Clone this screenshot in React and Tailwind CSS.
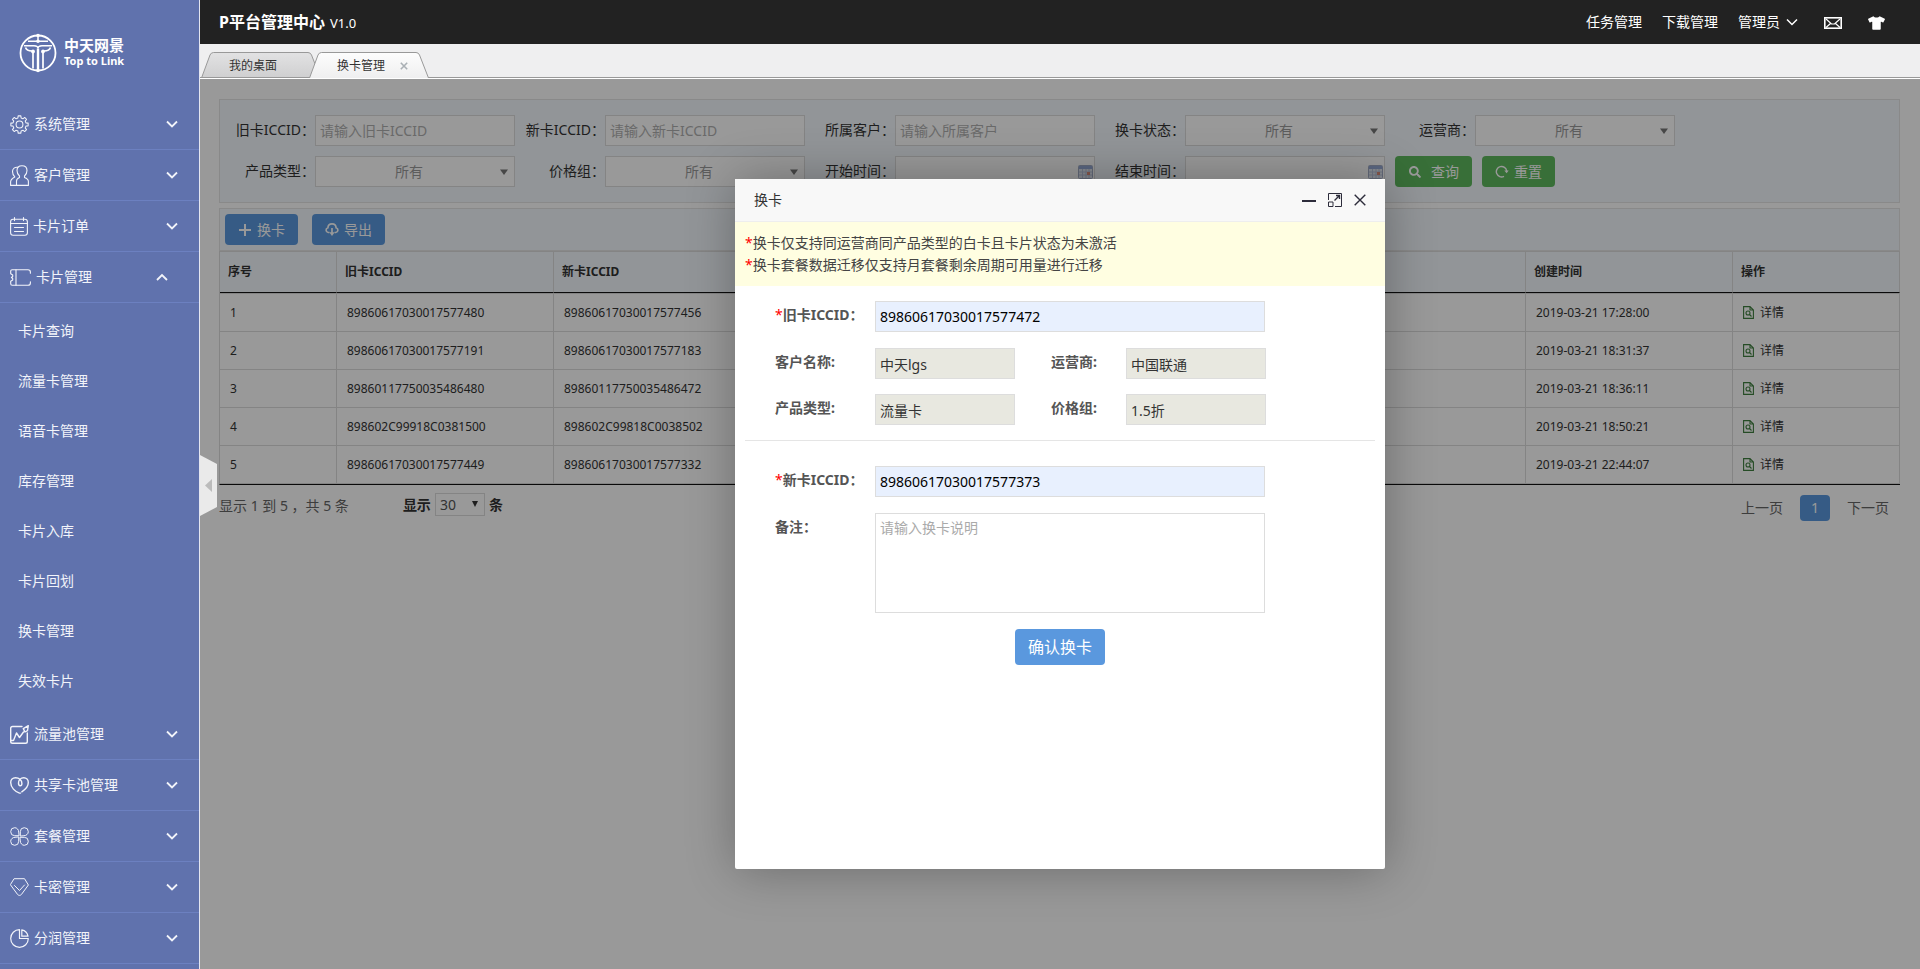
import { useState } from "react";
import { FaSearch, FaTshirt } from "react-icons/fa";

// Обычные контурные иконки меню
const gearPath = () => {
  const points = [];
  for (let i = 0; i < 8; i++) {
    [[-14, 7], [-9, 9.2], [9, 9.2], [14, 7]].forEach(([shift, r]) => {
      const a = ((i * 45 + shift) * Math.PI) / 180;
      points.push(`${(10 + r * Math.sin(a)).toFixed(2)} ${(10 - r * Math.cos(a)).toFixed(2)}`);
    });
  }
  return `M${points.join("L")}Z`;
};

const MenuSvg = ({ w = 19, h = 19, box, width = 1.1, children }) => (
  <svg
    width={w}
    height={h}
    viewBox={box || `0 0 ${w} ${h}`}
    fill="none"
    stroke="currentColor"
    strokeWidth={width}
    strokeLinejoin="round"
    strokeLinecap="round"
    className="shrink-0"
  >
    {children}
  </svg>
);

const icons = {
  gear: (
    <MenuSvg box="0 0 20 20">
      <path d={gearPath()} />
      <circle cx="10" cy="10" r="3.6" />
    </MenuSvg>
  ),
  users: (
    <MenuSvg h={21}>
      <path d="M6.5 20.4V16c0-2 1-2.600 3-3.400V11C7.800 9.500 7 8 7 5.500C7 2.500 9 .7 12 .7s5 1.800 5 4.800c0 2.500-.8 4-2.500 5.500v1.600c2.500.9 3.900 1.600 3.900 4v3.800z" />
      <path d="M8 2.300C4.800 1.700 2.500 3.600 2.500 6.500c0 2.300.8 4 2.300 5.400C2 13.300.6 14.500.6 17v3.400h5.900" />
    </MenuSvg>
  ),
  order: (
    <MenuSvg w={18}>
      <rect x=".6" y="2.300" width="16.800" height="16" rx="2.500" />
      <path d="M4.500.6v3M13.500.6v3M.6 6.500h16.800M4.500 10.500h9M4.500 14.500h9" />
    </MenuSvg>
  ),
  ticket: (
    <MenuSvg w={21} h={17}>
      <path d="M6 .7H2.200C1.200.7.7 1.300.7 2.300v2.400l2 1.300v1.500l-1.300 1 1.300 1V11l-2 1.300v2.400c0 1 .5 1.600 1.500 1.600H6z" />
      <path d="M6 .7h12c1.500 0 2.400.8 2.400 2.300v1.300M6 16.300h12c1.500 0 2.400-.8 2.400-2.300v-1.300" />
    </MenuSvg>
  ),
  chart: (
    <MenuSvg width={1.4}>
      <path d="M12 1.500H2.500c-1.200 0-1.800.6-1.800 1.800v13.200c0 1.200.6 1.800 1.800 1.800h13c1.200 0 1.800-.6 1.800-1.800V8" />
      <path d="M1 15.500h2.500L6.500 8l3 4.500L13.500 7M13.300 3.600L18.300.7l-.8 5-2.500 1.300z" />
    </MenuSvg>
  ),
  heart: (
    <MenuSvg h={17} width={1.4}>
      <path d="M11.800 14.800C15.800 12.300 18.300 9 18.300 5.600c0-2.800-2-4.900-4.500-4.900-3 0-5.300 2.300-5.300 5.300 0 1.500.6 2.700 1.700 2.700 1 0 1.700-1 1.700-2.200C11.900 3 9 .7 5.500.7 2.700.7.7 2.800.7 5.600c0 4.800 4.300 9.200 8.800 10.500h1" />
    </MenuSvg>
  ),
  clover: (
    <MenuSvg width={1}>
      <path d="M8.700 8.700H4.700A4 4 0 1 1 8.700 4.700zM10.300 8.700V4.700A4 4 0 1 1 14.300 8.700zM8.700 10.300V14.300A4 4 0 1 1 4.700 10.300zM10.300 10.300H14.300A4 4 0 1 1 10.300 14.300z" />
    </MenuSvg>
  ),
  diamond: (
    <MenuSvg h={18} width={1}>
      <path d="M4.500.7h10L18.400 7l-7 9.500c-1.200 1.200-2.600 1.200-3.800 0L.6 7z" />
      <path d="M4.500 7.500l5 5 5-5.500" />
    </MenuSvg>
  ),
  pie: (
    <MenuSvg width={1.2}>
      <path d="M9.500.7A8.800 8.800 0 1 0 18.300 9.500H9.500zM11.800.9v6.300h6.200C17.300 3.800 15 1.500 11.800.9z" />
    </MenuSvg>
  ),
};

const menu = [
  { name: "系统管理", icon: "gear" },
  { name: "客户管理", icon: "users" },
  { name: "卡片订单", icon: "order" },
  {
    name: "卡片管理",
    icon: "ticket",
    children: ["卡片查询", "流量卡管理", "语音卡管理", "库存管理", "卡片入库", "卡片回划", "换卡管理", "失效卡片"],
  },
  { name: "流量池管理", icon: "chart" },
  { name: "共享卡池管理", icon: "heart" },
  { name: "套餐管理", icon: "clover" },
  { name: "卡密管理", icon: "diamond" },
  { name: "分润管理", icon: "pie" },
];

const rows = [
  { oldId: "89860617030017577480", newId: "89860617030017577456", time: "2019-03-21 17:28:00" },
  { oldId: "89860617030017577191", newId: "89860617030017577183", time: "2019-03-21 18:31:37" },
  { oldId: "89860117750035486480", newId: "89860117750035486472", time: "2019-03-21 18:36:11" },
  { oldId: "898602C99918C0381500", newId: "898602C99818C0038502", time: "2019-03-21 18:50:21" },
  { oldId: "89860617030017577449", newId: "89860617030017577332", time: "2019-03-21 22:44:07" },
];

const Chevron = ({ up, width = 1.8 }) => (
  <svg width="12" height="8" viewBox="0 0 12 8" fill="none" stroke="currentColor" strokeWidth={width}>
    <path d={up ? "M1 7l5-5 5 5" : "M1 1.500l5 5 5-5"} />
  </svg>
);

function Logo() {
  return (
    <div className="flex h-[99px] shrink-0 items-center gap-[7px] pt-[7px] pl-[19px] text-white">
      <svg width="38" height="40" viewBox="0 0 38 40" fill="none" stroke="currentColor">
        <circle cx="19" cy="20" r="17.500" strokeWidth="1.800" />
        <circle cx="19" cy="2.500" r="1.800" fill="currentColor" stroke="none" />
        <circle cx="19" cy="37.500" r="1.800" fill="currentColor" stroke="none" />
        <path d="M9 8.300h20M5 12.800h10c2.500 0 4 1 4 2.700 0-1.700 1.500-2.700 4-2.700h10" strokeWidth="1.600" />
        <path d="M19 3v6" strokeWidth="1.500" />
        <circle cx="19" cy="8.300" r="1.800" fill="currentColor" stroke="none" />
        <path d="M6.500 14.500c1 3 3.500 3.500 6.500 3.500M31.500 14.500c-1 3-3.500 3.500-6.500 3.500" strokeWidth="1.700" />
        <path d="M14 18.500v17M24 18.500v17" strokeWidth="1.700" />
        <path d="M19 15.500v21.500" strokeWidth="2.400" />
        <circle cx="14" cy="18.500" r="1.900" fill="currentColor" stroke="none" />
        <circle cx="24" cy="18.500" r="1.900" fill="currentColor" stroke="none" />
      </svg>
      <div className="font-bold">
        <div className="text-[15px] leading-4">中天网景</div>
        <div className="text-[11px] leading-4">Top to Link</div>
      </div>
    </div>
  );
}

function Sidebar() {
  return (
    <nav className="flex h-screen w-[200px] shrink-0 flex-col overflow-hidden border-r border-[#e4e6f0] bg-[#6072ad] text-sm text-[#f2f4fa]">
      <Logo />
      {menu.map((item) => (
        <div key={item.name} className="shrink-0">
          <button className={`flex h-[51px] w-full items-center gap-[5px] border-b border-[#6c80c0] pl-[10px] ${item.children ? "pr-[31px]" : "pr-[21px]"}`}>
            {icons[item.icon]}
            <span className="flex-1 text-left">{item.name}</span>
            <Chevron up={!!item.children} />
          </button>
          {item.children && (
            <ul className="py-[3px]">
              {item.children.map((child) => (
                <li key={child}>
                  <a href="#" className="block h-[50px] pl-[18px] leading-[50px]">{child}</a>
                </li>
              ))}
            </ul>
          )}
        </div>
      ))}
    </nav>
  );
}

function Header() {
  return (
    <header className="flex h-11 items-center bg-[#222] pr-[35px] pl-[19px] text-sm text-white">
      <h1 className="flex flex-1 items-baseline gap-[5px] text-base font-bold leading-5">
        P平台管理中心 <span className="text-[13px] font-normal">V1.0</span>
      </h1>
      <a href="#" className="mr-5">任务管理</a>
      <a href="#" className="mr-5">下载管理</a>
      <button className="mr-[26px] flex items-center gap-1.5">
        管理员
        <Chevron width={1.5} />
      </button>
      <button aria-label="消息" className="mr-[26px] pt-0.5">
        <svg width="18" height="12" viewBox="0 0 18 12" fill="none" stroke="currentColor">
          <rect x=".8" y=".8" width="16.400" height="10.400" strokeWidth="1.600" />
          <path d="M2 2l5.500 5h3L16 2M2 10.500l4.500-4M16 10.500l-4.500-4" strokeWidth="1.200" />
        </svg>
      </button>
      <button aria-label="换肤" className="pt-0.5">
        <FaTshirt className="h-[14px] w-[17px]" />
      </button>
    </header>
  );
}

function Tab({ title, active, closable }) {
  return (
    <div className={`relative flex h-[26px] w-[120px] items-center pt-0.5 pl-7 text-xs text-[#333] ${active ? "z-10 -ml-3" : ""}`}>
      <svg className="absolute inset-0" width="120" height="26" viewBox="0 0 120 26">
        <defs>
          <linearGradient id="tabIdle" x1="0" y1="0" x2="0" y2="1">
            <stop offset="0" stopColor="#e2e2e3" />
            <stop offset="1" stopColor="#cfcfd0" />
          </linearGradient>
          <linearGradient id="tabActive" x1="0" y1="0" x2="0" y2="1">
            <stop offset="0" stopColor="#fdfdfd" />
            <stop offset="1" stopColor="#efeff0" />
          </linearGradient>
        </defs>
        <path
          d="M.5 26L9 3Q10 .5 12.500.5H107Q109.500.5 110.500 3L119.500 26"
          fill={active ? "url(#tabActive)" : "url(#tabIdle)"}
          stroke="#999"
        />
        {!active && <path d="M0 25.500H120" stroke="#999" />}
      </svg>
      <span className="relative">{title}</span>
      {closable && (
        <button aria-label="关闭" className="relative ml-[15px] text-[#aab0b5]">
          <svg width="8" height="8" viewBox="0 0 8 8" stroke="currentColor" strokeWidth="1.600">
            <path d="M.8.8l6.400 6.400M7.200.8L.8 7.200" />
          </svg>
        </button>
      )}
    </div>
  );
}

function Field({ id, label, children }) {
  return (
    <div className="flex w-[290px]">
      <label htmlFor={id} className="w-[90px] text-right leading-[30px] text-[#333]">{label}：</label>
      <div className="relative h-[31px] w-[200px]">{children}</div>
    </div>
  );
}

const inputClass = "h-[31px] w-full border border-[#ddd] bg-white px-1 text-sm placeholder:text-[#b0b0b0]";

const TextField = ({ id, label }) => (
  <Field id={id} label={label}>
    <input id={id} className={inputClass} placeholder={`请输入${label}`} />
  </Field>
);

const SelectField = ({ id, label }) => (
  <Field id={id} label={label}>
    <select id={id} className="h-[31px] w-full appearance-none border border-[#ddd] bg-white pr-3 text-center text-[#999] [text-align-last:center]">
      <option>所有</option>
    </select>
    <svg className="pointer-events-none absolute top-[13px] right-[7px]" width="8" height="6" viewBox="0 0 8 6">
      <path d="M0 .5h8L4 6z" fill="#777" />
    </svg>
  </Field>
);

const DateField = ({ id, label }) => (
  <Field id={id} label={label}>
    <input id={id} className={inputClass} />
    <svg className="pointer-events-none absolute top-[9px] right-[2px]" width="15" height="14" viewBox="0 0 15 14">
      <rect x=".5" y=".5" width="14" height="13" rx="1" fill="#e3e8f2" stroke="#a3adc6" />
      <rect x="1" y="1" width="13" height="3" fill="#97abd6" />
      <path d="M1 7h13M1 10h13M4.500 4v9M8 4v9M11 4v9" stroke="#b9c3dc" />
      <rect x="9" y="7" width="3" height="3" fill="#dd8f7c" />
    </svg>
  </Field>
);

function Filters() {
  return (
    <form className="flex flex-col gap-[10px] border border-[#e5e5e5] bg-[#f3f9fd] px-[5px] py-[15px] text-sm">
      <div className="flex">
        <TextField id="oldIccid" label="旧卡ICCID" />
        <TextField id="newIccid" label="新卡ICCID" />
        <TextField id="customer" label="所属客户" />
        <SelectField id="status" label="换卡状态" />
        <SelectField id="operator" label="运营商" />
      </div>
      <div className="flex">
        <SelectField id="product" label="产品类型" />
        <SelectField id="price" label="价格组" />
        <DateField id="start" label="开始时间" />
        <DateField id="end" label="结束时间" />
        <button type="button" className="ml-[10px] flex h-[31px] w-[77px] items-center gap-[10px] rounded bg-[#5eb95e] pl-[14px] text-white">
          <FaSearch className="h-3 w-3" />
          查询
        </button>
        <button type="reset" className="ml-[10px] flex h-[31px] w-[73px] items-center gap-[5px] rounded bg-[#5eb95e] pl-[13px] text-white">
          <svg width="14" height="13" viewBox="0 0 14 13" fill="none" stroke="currentColor" strokeWidth="1.400">
            <path d="M9 11.300A5.200 5.200 0 1 1 11.700 6" />
            <path d="M9.300 5.500h4.400L11.600 8.300z" fill="currentColor" stroke="none" />
          </svg>
          重置
        </button>
      </div>
    </form>
  );
}

function Toolbar() {
  return (
    <div className="mt-[5px] flex gap-[14px] border border-[#e5e5e5] bg-[#f3f9fd] p-[5px] text-sm text-white">
      <button className="flex h-[31px] w-[73px] items-center gap-[6px] rounded bg-[#5a98de] pl-[14px]">
        <svg width="12" height="12" viewBox="0 0 12 12" stroke="currentColor" strokeWidth="2">
          <path d="M6 0v12M0 6h12" />
        </svg>
        换卡
      </button>
      <button className="flex h-[31px] w-[73px] items-center gap-[5px] rounded bg-[#5a98de] pl-[13px]">
        <svg width="14" height="13" viewBox="0 0 14 13" fill="none" stroke="currentColor" strokeWidth="1.700">
          <path d="M4.500 9.500H3.200a2.400 2.400 0 0 1-.3-4.700C3 2.500 4.800.9 7 .9s4 1.600 4.100 3.900a2.400 2.400 0 0 1-.3 4.700H9.500" />
          <path d="M7 5v6" />
          <path d="M4.300 9.300h5.400L7 13z" fill="currentColor" stroke="none" />
        </svg>
        导出
      </button>
    </div>
  );
}

const thClass = "h-[42px] border-t border-r border-b border-t-[#ddd] border-r-[#ddd] border-b-[#111] p-0 pl-2";
const tdClass = "border-r border-b border-[#ddd] p-0 pl-[10px] group-first:border-t";

function CardTable() {
  return (
    <table className="w-full table-fixed border-separate border-spacing-0 border-b border-l border-b-[#111] border-l-[#ddd] text-xs text-[#333]">
      <colgroup>
        <col className="w-[117px]" />
        <col className="w-[217px]" />
        <col className="w-[217px]" />
        <col />
        <col className="w-[207px]" />
        <col className="w-[167px]" />
      </colgroup>
      <thead className="bg-[#f3f9fd] text-left">
        <tr>
          <th className={thClass}>序号</th>
          <th className={thClass}>旧卡ICCID</th>
          <th className={thClass}>新卡ICCID</th>
          <th className={thClass} />
          <th className={thClass}>创建时间</th>
          <th className={thClass}>操作</th>
        </tr>
      </thead>
      <tbody className="bg-white">
        {rows.map((row, index) => (
          <tr key={row.oldId} className="group h-[38px] first:h-[39px]">
            <td className={tdClass}>{index + 1}</td>
            <td className={tdClass}>{row.oldId}</td>
            <td className={tdClass}>{row.newId}</td>
            <td className={tdClass} />
            <td className={tdClass}>{row.time}</td>
            <td className={tdClass}>
              <a href="#" className="flex items-center gap-[6px]">
                <svg width="11" height="13" viewBox="0 0 11 13" fill="none" stroke="#3f7f3f" strokeWidth="1.100">
                  <path d="M.6.6h6.400l3.400 3.400v8.400H.6zM7 .6v3.400h3.400" />
                  <circle cx="5" cy="7" r="2" />
                  <path d="M6.500 8.500l2 2" />
                </svg>
                详情
              </a>
            </td>
          </tr>
        ))}
      </tbody>
    </table>
  );
}

function TableFooter() {
  return (
    <div className="flex justify-between text-sm">
      <div className="flex pt-2">
        <p className="mr-[54px] leading-[26px] text-[#666]">显示 1 到 5 ，共 5 条</p>
        <label htmlFor="pageSize" className="leading-6 font-bold text-[#333]">显示</label>
        <div className="relative mx-1">
          <select id="pageSize" className="h-[23px] w-[50px] appearance-none border border-[#ddd] bg-white pl-1 text-[#555]">
            <option>30</option>
          </select>
          <svg className="pointer-events-none absolute top-2 right-[7px]" width="6" height="6" viewBox="0 0 6 6">
            <path d="M0 0h6L3 6z" fill="#333" />
          </svg>
        </div>
        <span className="leading-6 font-bold text-[#333]">条</span>
      </div>
      <div className="flex items-center gap-[17px] pt-[10px] pr-[11px] leading-[26px] text-[#666]">
        <a href="#">上一页</a>
        <a href="#" className="w-[30px] rounded-sm bg-[#5a98de] text-center text-white">1</a>
        <a href="#">下一页</a>
      </div>
    </div>
  );
}

const Label = ({ id, required, className = "w-[100px]", children }) => (
  <label htmlFor={id} className={`shrink-0 leading-7 font-bold text-[#555] ${className}`}>
    {required && <span className="font-normal text-[#f00]">*</span>}
    {children}
  </label>
);

const iccidClass = "h-[31px] w-[390px] border border-[#ddd] bg-[#e8f0fe] px-1 text-black";
const readonlyClass = "h-[31px] w-[140px] border border-[#ddd] bg-[#e8e8e0] px-1 text-[#333]";

function ChangeCardModal() {
  const [form, setForm] = useState({
    oldCard: "89860617030017577472",
    newCard: "89860617030017577373",
    remark: "",
  });

  const handleChange = (e) => {
    setForm((prev) => ({ ...prev, [e.target.name]: e.target.value }));
  };

  return (
    <div role="dialog" aria-label="换卡" className="h-[690px] w-[650px] rounded-xs bg-white text-sm shadow-[1px_1px_50px_rgba(0,0,0,0.3)]">
      <div className="flex h-[43px] items-center border-b border-[#eee] bg-[#f8f8f8] pr-[19px] pl-[19px] text-[#333]">
        <h2 className="flex-1">换卡</h2>
        <div className="flex items-center gap-3 text-[#2d2c3b]">
          <button aria-label="最小化">
            <svg width="14" height="14" viewBox="0 0 14 14" stroke="currentColor" strokeWidth="2">
              <path d="M0 8h14" />
            </svg>
          </button>
          <button aria-label="最大化">
            <svg width="14" height="14" viewBox="0 0 14 14" fill="none" stroke="currentColor">
              <path d="M.5 7V.5h13v13H7" />
              <path d="M.5 9h4.500v4.500H.5z" />
              <path d="M6.500 7.500l5-5M8 2.500h3.500V6" strokeWidth="1.400" />
            </svg>
          </button>
          <button aria-label="关闭">
            <svg width="12" height="12" viewBox="0 0 12 12" stroke="currentColor" strokeWidth="1.400">
              <path d="M.7.7l10.600 10.600M11.300.7L.7 11.300" />
            </svg>
          </button>
        </div>
      </div>
      <div className="bg-[#fffee1] p-[10px] leading-[22px] text-[#444]">
        <p><span className="text-[#f00]">*</span>换卡仅支持同运营商同产品类型的白卡且卡片状态为未激活</p>
        <p><span className="text-[#f00]">*</span>换卡套餐数据迁移仅支持月套餐剩余周期可用量进行迁移</p>
      </div>
      <form className="px-10 pt-[15px]">
        <div className="flex">
          <Label id="oldCard" required>旧卡ICCID：</Label>
          <input id="oldCard" name="oldCard" className={iccidClass} value={form.oldCard} onChange={handleChange} />
        </div>
        <div className="mt-4 flex">
          <Label id="custName">客户名称:</Label>
          <input id="custName" readOnly className={readonlyClass} value="中天lgs" />
          <Label id="custOperator" className="ml-9 w-[75px]">运营商:</Label>
          <input id="custOperator" readOnly className={readonlyClass} value="中国联通" />
        </div>
        <div className="mt-[15px] flex">
          <Label id="cardType">产品类型:</Label>
          <input id="cardType" readOnly className={readonlyClass} value="流量卡" />
          <Label id="cardPrice" className="ml-9 w-[75px]">价格组:</Label>
          <input id="cardPrice" readOnly className={readonlyClass} value="1.5折" />
        </div>
        <hr className="-mx-[30px] mt-[15px] mb-[25px] border-[#e5e5e5]" />
        <div className="flex">
          <Label id="newCard" required>新卡ICCID：</Label>
          <input id="newCard" name="newCard" className={iccidClass} value={form.newCard} onChange={handleChange} />
        </div>
        <div className="mt-4 flex">
          <Label id="remark">备注：</Label>
          <textarea
            id="remark"
            name="remark"
            className="h-[100px] w-[390px] resize-none border border-[#ddd] p-1 leading-5 placeholder:text-[#aaa]"
            placeholder="请输入换卡说明"
            value={form.remark}
            onChange={handleChange}
          />
        </div>
        <button type="button" className="mx-auto mt-4 block h-9 w-[90px] rounded bg-[#5a98de] text-base text-white">确认换卡</button>
      </form>
    </div>
  );
}

export default function App() {
  return (
    <div className="flex h-screen overflow-hidden bg-white font-['Noto_Sans','Noto_Sans_CJK_SC',sans-serif]">
      <Sidebar />
      <div className="flex min-w-0 flex-1 flex-col">
        <Header />
        <div className="mb-px flex h-[34px] items-end border-b border-[#999] bg-[#efeff0]">
          <div className="-mb-px ml-px flex">
            <Tab title="我的桌面" />
            <Tab title="换卡管理" active closable />
          </div>
        </div>
        <main className="relative flex-1 px-5 pt-5 pl-[19px]">
          <Filters />
          <Toolbar />
          <CardTable />
          <TableFooter />
          <div className="absolute inset-0 flex items-center justify-center bg-black/40">
            <ChangeCardModal />
          </div>
          <button aria-label="收起菜单" className="absolute top-[376px] left-0">
            <svg width="17" height="61" viewBox="0 0 17 61">
              <path d="M0 0l17 9v43L0 61z" fill="#eaeaea" />
              <path d="M12 24v13L5 30.500z" fill="#bbb" />
            </svg>
          </button>
        </main>
      </div>
    </div>
  );
}
